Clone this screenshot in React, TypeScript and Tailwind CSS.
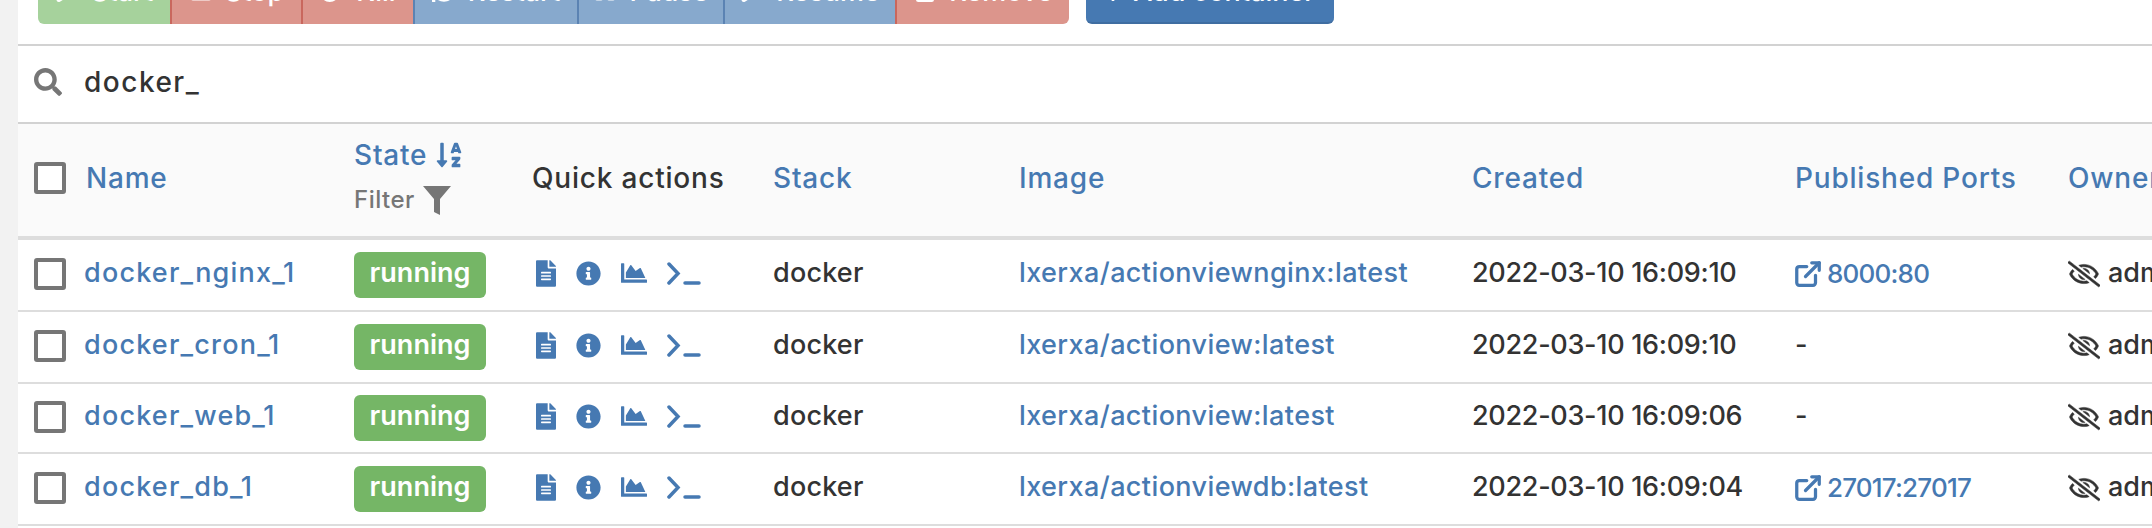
import React from "react";
import {
  FaSearch,
  FaFileAlt,
  FaInfoCircle,
  FaChartArea,
  FaRegEyeSlash,
  FaSortAlphaDown,
  FaPlay,
  FaStop,
  FaBomb,
  FaSync,
  FaPause,
  FaTrashAlt,
  FaPlus,
} from "react-icons/fa";
import { ExternalLink } from "lucide-react";

const containers = [
  { name: "docker_nginx_1", image: "lxerxa/actionviewnginx:latest", created: "2022-03-10 16:09:10", port: "8000:80", rowClass: "h-[72px]" },
  { name: "docker_cron_1", image: "lxerxa/actionview:latest", created: "2022-03-10 16:09:10", port: "", rowClass: "h-[72px]" },
  { name: "docker_web_1", image: "lxerxa/actionview:latest", created: "2022-03-10 16:09:06", port: "", rowClass: "h-[70px]" },
  { name: "docker_db_1", image: "lxerxa/actionviewdb:latest", created: "2022-03-10 16:09:04", port: "27017:27017", rowClass: "h-[72px]" },
];

const toolbar = [
  { label: "Start", Icon: FaPlay, className: "w-[132px] bg-[#a6d29c] rounded-bl-md" },
  { label: "Stop", Icon: FaStop, className: "w-[131px] bg-[#dc958c] border-l-2 border-[#c9675d]" },
  { label: "Kill", Icon: FaBomb, className: "w-[112px] bg-[#dc958c] border-l-2 border-[#c9675d]" },
  { label: "Restart", Icon: FaSync, className: "w-[164px] bg-[#87a9cd] border-l-2 border-[#5b83b3]" },
  { label: "Pause", Icon: FaPause, className: "w-[146px] bg-[#87a9cd] border-l-2 border-[#5b83b3]" },
  { label: "Resume", Icon: FaPlay, className: "w-[172px] bg-[#87a9cd] border-l-2 border-[#5b83b3]" },
  { label: "Remove", Icon: FaTrashAlt, className: "w-[174px] bg-[#dc958c] border-l-2 border-[#c9675d] rounded-br-md" },
];

const gridCols = "grid grid-cols-[336px_178px_241px_246px_453px_323px_273px_84px]";

function Checkbox() {
  return <div className="w-8 h-8 shrink-0 border-[4px] border-[#767676] rounded-[3px] bg-white" />;
}

function App() {
  return (
    <div
      className="w-[2152px] h-[528px] overflow-hidden bg-[#f2f2f2] pl-[18px] text-[27px] font-medium text-[#333333]"
      style={{ fontFamily: "Inter, 'Noto Sans', sans-serif" }}
    >
      <div className="w-[2134px] h-[528px] bg-white overflow-hidden">
        {/* Toolbar, top is cut off */}
        <div className="h-[46px] border-b-2 border-[#d2d2d2] pl-5">
          <div className="h-[24px] flex items-end overflow-hidden text-white">
            <div className="flex">
              {toolbar.map((b) => (
                <div key={b.label} className={`${b.className} h-[46px] flex items-end justify-center gap-3 pb-[18px] leading-[28px] whitespace-nowrap`}>
                  <b.Icon className="w-6 h-6 mb-1" />
                  {b.label}
                </div>
              ))}
            </div>
            <div className="ml-[17px] w-[248px] h-[46px] bg-[#4679b2] border-b-2 border-[#3f6da1] rounded-b-md flex items-end justify-center gap-3 pb-4 leading-[28px] whitespace-nowrap">
              <FaPlus className="w-4 h-4 mb-1" />
              Add container
            </div>
          </div>
        </div>

        {/* Search */}
        <div className="h-[78px] border-b-2 border-[#d2d2d2] flex items-center pl-4 pb-1">
          <FaSearch className="w-7 h-7 text-[#767676]" />
          <span className="ml-[22px] text-[28px] tracking-[1.5px] text-[#333333]">docker_</span>
        </div>

        {/* Header */}
        <div className={`${gridCols} h-[116px] bg-[#fafafa] border-b-4 border-[#dddddd] items-center text-[28px] tracking-[0.8px] text-[#4679b2] whitespace-nowrap pb-1`}>
          <div className="flex items-center pl-4">
            <Checkbox />
            <span className="ml-5">Name</span>
          </div>
          <div className="flex flex-col gap-[6px] pb-1">
            <div className="flex items-center gap-2">
              State
              <FaSortAlphaDown className="w-7 h-7" />
            </div>
            <div className="flex items-center gap-2 text-[24px] tracking-[0.5px] text-[#767676]">
              Filter
              <svg viewBox="0 0 28 29" className="w-7 h-[29px]" fill="currentColor">
                <path d="M0 0h28L17 13v16l-6-3V13z" />
              </svg>
            </div>
          </div>
          <div className="text-[#333333]">Quick actions</div>
          <div>Stack</div>
          <div>Image</div>
          <div>Created</div>
          <div>Published Ports</div>
          <div>Ownership</div>
        </div>

        {/* Rows */}
        {containers.map((c) => (
          <div key={c.name} className={`${gridCols} ${c.rowClass} border-b-2 border-[#dddddd] items-center whitespace-nowrap`}>
            <div className="flex items-center pl-4 pb-[2px]">
              <Checkbox />
              <span className="ml-[18px] pb-[1px] tracking-[1.2px] text-[#4679b2]">{c.name}</span>
            </div>
            <div>
              <span className="inline-flex items-center justify-center w-[132px] h-[46px] rounded-md bg-[#75b666] text-white font-semibold pb-1">
                running
              </span>
            </div>
            <div className="flex items-center text-[#4679b2] pl-1 pb-1">
              <FaFileAlt className="w-5 h-[27px]" />
              <FaInfoCircle className="w-[25px] h-[25px] ml-5" />
              <FaChartArea className="w-[26px] h-[26px] ml-5" />
              <svg viewBox="0 0 34 23" className="w-[34px] h-[23px] ml-5" fill="none" stroke="currentColor" strokeWidth="3.5" strokeLinecap="round">
                <path d="M2 2l9 9.5-9 9.5" />
                <path d="M18 21h14" />
              </svg>
            </div>
            <div className="pb-[3px] tracking-[0.2px]">docker</div>
            <div className="pb-[3px] tracking-[0.4px] text-[#4679b2]">{c.image}</div>
            <div className="pb-[3px] tracking-[-0.3px]">{c.created}</div>
            <div className="pb-[3px]">
              {c.port ? (
                <span className="flex items-center gap-1 text-[26px] tracking-[-0.8px] text-[#4679b2]">
                  <ExternalLink className="w-[30px] h-[30px] -ml-[2px]" strokeWidth={2.6} />
                  {c.port}
                </span>
              ) : (
                "-"
              )}
            </div>
            <div className="flex items-center gap-2 pb-[3px]">
              <FaRegEyeSlash className="w-8 h-8 shrink-0" stroke="currentColor" strokeWidth={10} />
              administrators
            </div>
          </div>
        ))}
      </div>
    </div>
  );
}

export default App;
